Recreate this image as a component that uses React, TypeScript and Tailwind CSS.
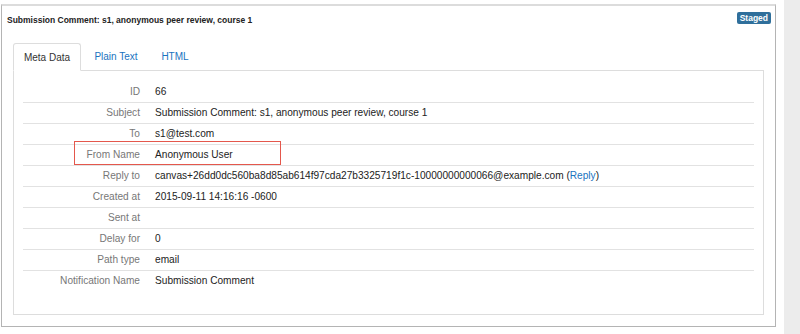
import React from "react";

const rows: { label: string; value: React.ReactNode }[] = [
  { label: "ID", value: "66" },
  { label: "Subject", value: "Submission Comment: s1, anonymous peer review, course 1" },
  { label: "To", value: "s1@test.com" },
  { label: "From Name", value: "Anonymous User" },
  {
    label: "Reply to",
    value: (
      <>
        canvas+26dd0dc560ba8d85ab614f97cda27b3325719f1c-10000000000066@example.com (
        <a className="text-[#1a73c0]">Reply</a>)
      </>
    ),
  },
  { label: "Created at", value: "2015-09-11 14:16:16 -0600" },
  { label: "Sent at", value: "" },
  { label: "Delay for", value: "0" },
  { label: "Path type", value: "email" },
  { label: "Notification Name", value: "Submission Comment" },
];

export default function App() {
  return (
    <div
      className="flex w-[800px] h-[334px] bg-white overflow-hidden"
      style={{ fontFamily: '"Liberation Sans", Arial, sans-serif' }}
    >
      <div className="w-[776px] pl-[1px] pt-[4px]">
        <div className="h-[323px] border-t-2 border-t-[#dcdcdc] border-l border-r border-b border-l-[#b4b4b4] border-r-[#b4b4b4] border-b-[#b4b4b4] flex flex-col">
          <div className="flex items-start justify-between pl-[5px] pr-[4px] pt-[6px] h-[37px]">
            <div className="text-[8.5px] font-bold text-[#222] leading-[14px] mt-[1px]">
              Submission Comment: s1, anonymous peer review, course 1
            </div>
            <span className="mt-[0px] bg-[#2f6f9b] text-white text-[8.5px] font-bold leading-[12px] h-[12px] px-[3px] rounded-[2px]">
              Staged
            </span>
          </div>
          <div className="px-[11px]">
            <div className="flex h-[27px] items-end">
              <div className="h-[28px] w-[68px] border border-[#dddddd] border-b-white rounded-t-[3px] bg-white flex items-center justify-center text-[10px] text-[#333] relative z-10 -mb-px">
                Meta Data
              </div>
              <div className="h-[27px] w-[70px] flex items-center justify-center text-[10px] text-[#1a73c0]">
                Plain Text
              </div>
              <div className="h-[27px] w-[48px] flex items-center justify-center text-[10px] text-[#1a73c0]">
                HTML
              </div>
            </div>
            <div className="h-[245px] border border-[#dddddd] px-[9px] pt-[10px]">
              <div className="relative">
                {rows.map((r, i) => (
                  <div
                    key={r.label}
                    className={
                      "flex h-[21px] items-center text-[10.15px] " +
                      (i > 0 ? "border-t border-[#e2e2e2]" : "")
                    }
                  >
                    <div className="w-[117px] text-right text-[#777] pr-[0px]">{r.label}</div>
                    <div className="pl-[15px] text-[#222] whitespace-nowrap">{r.value}</div>
                  </div>
                ))}
                <div className="absolute left-[51px] top-[60px] w-[207px] h-[24px] border-[1.5px] border-[#e4574c]"></div>
              </div>
            </div>
          </div>
        </div>
      </div>
      <div className="w-[8px]"></div>
      <div className="flex-1 bg-[#ececec]"></div>
    </div>
  );
}
